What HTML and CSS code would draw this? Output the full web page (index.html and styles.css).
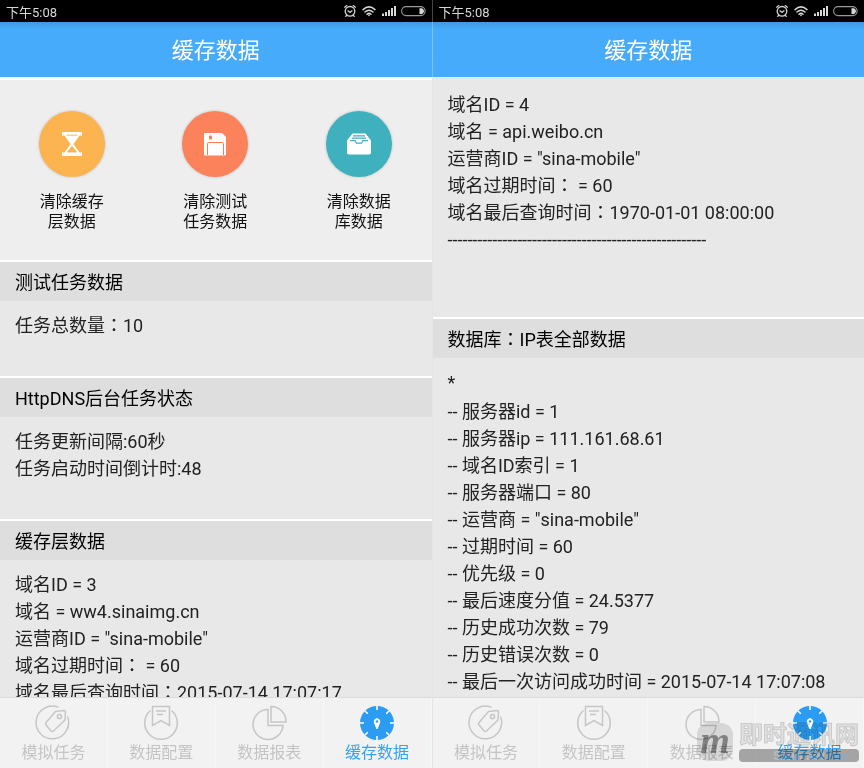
FILE: index.html
```html
<!DOCTYPE html>
<html lang="zh-CN">
<head>
<meta charset="utf-8">
<meta name="viewport" content="width=device-width, initial-scale=1">
<title>缓存数据</title>
<link rel="stylesheet" href="styles.css">
</head>
<body>
<svg class="defs" aria-hidden="true">
  <symbol id="status" viewBox="0 0 84 16">
    <g fill="none" stroke="#d4d4d4" stroke-width="1.3" stroke-linecap="round">
      <circle cx="8" cy="8.300" r="4.800"/>
      <path d="M6 7.800L8 9.400L10 7.800M2.700 4.200L4.700 2.600M13.300 4.200L11.300 2.600M4.600 12.300L3.800 13.400M11.400 12.300L12.200 13.400"/>
      <path d="M21 6.600Q27 1.200 33 6.600M23 9Q27 5.400 31 9M25 11.200Q27 9.400 29 11.200" stroke-width="1.500"/>
      <rect x="59.600" y="3.600" width="23.500" height="9" rx="4.500" stroke="#999" stroke-width="1.100"/>
    </g>
    <path d="M25.600 11.500H28.400L27 13.400ZM40 10.500h2v2.500h-2zM43 9h2v4h-2zM46 7h2v6h-2zM49 5h2v8h-2zM52 3h2v10h-2zM77.500 5.200H80Q82 6.300 82 8.100T80 11H77.500Z" fill="#d8d8d8"/>
  </symbol>
  <symbol id="tag" viewBox="0 0 36 36">
    <path d="M23.500 2.400A16.300 16.300 0 1 0 32.500 11.500"/>
    <path d="M20.500 6.500L29 5.500Q30.500 5.500 30.500 7L30 15L18.500 26Q17 27 16 26L10.800 19.500Q10 18.300 11.300 17.200Z"/>
    <circle cx="24.500" cy="11.500" r="2.100"/>
  </symbol>
  <symbol id="bookmark" viewBox="0 0 36 36">
    <path d="M7.500 5.500A16.300 16.300 0 1 0 28.500 5.500"/>
    <path d="M9.500 1.500H26.500V20.500L18 15.500L9.500 20.500ZM13 6H23M14 9.500H20"/>
  </symbol>
  <symbol id="pie" viewBox="0 0 36 36">
    <path d="M17 4.500A15 15 0 1 0 32 20.500H17Z"/>
    <path d="M20 1.500A15 15 0 0 1 35 17H20Z"/>
  </symbol>
  <symbol id="clock" viewBox="0 0 36 36">
    <circle cx="18" cy="18" r="17" fill="#2b9cf2" stroke="none"/>
    <path d="M18 1V5M18 31V35M1 18H5M31 18H35M6 6L8.800 8.800M27.200 27.200L30 30M6 30L8.800 27.200M27.200 8.800L30 6" stroke="#fff"/>
    <path d="M18 24L15.500 18A2.800 3 0 1 1 20.500 18Z" fill="#fff" stroke="#fff" stroke-width="1"/>
    <circle cx="18" cy="16.500" r="1.200" fill="#2b9cf2" stroke="none"/>
  </symbol>
</svg>

<div class="screens">
  <section class="phone">
    <div class="statusbar"><span>下午5:08</span><svg class="status-icons" aria-hidden="true"><use href="#status"/></svg></div>
    <header class="titlebar"><h1>缓存数据</h1></header>
    <main class="content">
      <div class="actions">
        <button type="button" class="action">
          <span class="disc amber"><svg viewBox="0 0 24 24" aria-hidden="true"><path d="M2 0H22V3.500H19.500L13.500 12L19.500 20.500H22V24H2V20.500H4.500L10.500 12L4.500 3.500H2Z" fill="#fff"/><path d="M6.500 3.200H17.500M7.500 20L12 14.500L16.500 20Z" fill="#fbb450" stroke="#fbb450"/></svg></span>
          <span>清除缓存<br>层数据</span>
        </button>
        <button type="button" class="action">
          <span class="disc coral"><svg viewBox="0 0 24 24" aria-hidden="true"><path d="M1 1H19L23 5V22.500Q23 23.500 22 23.500H2Q1 23.500 1 22.500Z" fill="#fff"/><rect x="6" y="3.500" width="3" height="4" rx="1" fill="#f97c55"/><path d="M4.500 23V11.500Q4.500 10.500 5.500 10.500H19.500Q20.500 10.500 20.500 11.500V23" fill="none" stroke="#f97c55"/></svg></span>
          <span>清除测试<br>任务数据</span>
        </button>
        <button type="button" class="action">
          <span class="disc teal"><svg viewBox="0 0 24 24" aria-hidden="true"><path d="M5.500 1.500H18.500L24 8.500V20.500Q24 22.500 22 22.500H2Q0 22.500 0 20.500V8.500Z" fill="#fff"/><path d="M6 3.800H18M5 6.200H19M3 8.700H8L9.500 11.200H14.500L16 8.700H21" fill="none" stroke="#3fb0bd" stroke-width="1.200"/></svg></span>
          <span>清除数据<br>库数据</span>
        </button>
      </div>
      <section class="group">
        <h2>测试任务数据</h2>
        <div class="lines"><p>任务总数量<span lang="zh-TW" class="colon">：</span>10</p></div>
      </section>
      <section class="group">
        <h2>HttpDNS后台任务状态</h2>
        <div class="lines"><p>任务更新间隔:60秒</p><p>任务启动时间倒计时:48</p></div>
      </section>
      <section class="group">
        <h2>缓存层数据</h2>
        <div class="lines">
          <p>域名ID = 3</p>
          <p>域名 = ww4.sinaimg.cn</p>
          <p>运营商ID = "sina-mobile"</p>
          <p>域名过期时间<span lang="zh-TW" class="colon">：</span> = 60</p>
          <p>域名最后查询时间<span lang="zh-TW" class="colon">：</span>2015-07-14 17:07:17</p>
        </div>
      </section>
    </main>
    <nav class="tabs">
      <a href="#"><svg aria-hidden="true"><use href="#tag"/></svg>模拟任务</a>
      <a href="#"><svg aria-hidden="true"><use href="#bookmark"/></svg>数据配置</a>
      <a href="#"><svg aria-hidden="true"><use href="#pie"/></svg>数据报表</a>
      <a href="#" class="active" aria-current="page"><svg aria-hidden="true"><use href="#clock"/></svg>缓存数据</a>
    </nav>
  </section>

  <section class="phone">
    <div class="statusbar"><span>下午5:08</span><svg class="status-icons" aria-hidden="true"><use href="#status"/></svg></div>
    <header class="titlebar"><h1>缓存数据</h1></header>
    <main class="content">
      <div class="lines scrolled">
        <p>域名ID = 4</p>
        <p>域名 = api.weibo.cn</p>
        <p>运营商ID = "sina-mobile"</p>
        <p>域名过期时间<span lang="zh-TW" class="colon">：</span> = 60</p>
        <p>域名最后查询时间<span lang="zh-TW" class="colon">：</span>1970-01-01 08:00:00</p>
        <p>----------------------------------------------------</p>
        <p><br></p>
      </div>
      <section class="group">
        <h2>数据库<span lang="zh-TW" class="colon">：</span>IP表全部数据</h2>
        <div class="lines">
          <p>*</p>
          <div class="record">
            <p>-- 服务器id = 1</p>
            <p>-- 服务器ip = 111.161.68.61</p>
            <p>-- 域名ID索引 = 1</p>
            <p>-- 服务器端口 = 80</p>
            <p>-- 运营商 = "sina-mobile"</p>
            <p>-- 过期时间 = 60</p>
            <p>-- 优先级 = 0</p>
            <p>-- 最后速度分值 = 24.5377</p>
            <p>-- 历史成功次数 = 79</p>
            <p>-- 历史错误次数 = 0</p>
            <p>-- 最后一次访问成功时间 = 2015-07-14 17:07:08</p>
          </div>
        </div>
      </section>
    </main>
    <nav class="tabs">
      <a href="#"><svg aria-hidden="true"><use href="#tag"/></svg>模拟任务</a>
      <a href="#"><svg aria-hidden="true"><use href="#bookmark"/></svg>数据配置</a>
      <a href="#"><svg aria-hidden="true"><use href="#pie"/></svg>数据报表</a>
      <a href="#" class="active" aria-current="page"><svg aria-hidden="true"><use href="#clock"/></svg>缓存数据</a>
    </nav>
    <div class="watermark">
      <span class="mark">m</span>
      <span class="brand"><span class="name">即时通讯网</span><span class="site">52im.net</span></span>
    </div>
  </section>
</div>
</body>
</html>
```
FILE: styles.css
```css
* { box-sizing: border-box; }

body {
  margin: 0;
  background: #e8e8e8;
  color: #222;
  font-family: Roboto, "Noto Sans CJK SC", sans-serif;
  font-size: 18px;
}

h1, h2, p { margin: 0; font-weight: 400; }

.defs { position: absolute; width: 0; height: 0; }

.screens { display: flex; height: 100vh; }

.phone {
  position: relative;
  flex: 1;
  min-width: 0;
  display: flex;
  flex-direction: column;
}

.phone + .phone { border-left: 1px solid #e4e4e4; }

.phone + .phone .statusbar,
.phone + .phone .titlebar { margin-left: -1px; border-left: 1px solid #ffffff44; }

.statusbar {
  flex: none;
  display: flex;
  align-items: center;
  justify-content: space-between;
  height: 22px;
  padding: 0 6px;
  background: #000;
  color: #d8d8d8;
  font-size: 13px;
}

.status-icons { width: 84px; height: 16px; }

.titlebar {
  flex: none;
  display: flex;
  align-items: center;
  justify-content: center;
  height: 55px;
  padding-top: 3px;
  background: linear-gradient(#4598da, #46abfa 7px);
  color: #fff;
}

.titlebar h1 { font-size: 22px; line-height: 32px; }

.content { flex: 1; min-height: 0; overflow: hidden; }

.actions {
  display: grid;
  grid-template-columns: repeat(3, 1fr);
  padding: 31px 1px 28px 0;
  border-top: 3px solid #fff;
  background: #eee;
}

.action {
  display: flex;
  flex-direction: column;
  align-items: center;
  gap: 15px;
  padding: 0;
  border: 0;
  background: none;
  color: #111;
  font: inherit;
  font-size: 16px;
  line-height: 20px;
}

.disc {
  display: flex;
  align-items: center;
  justify-content: center;
  width: 66px;
  height: 66px;
  border-radius: 50%;
  box-shadow: 0 0 3px #00000033;
}

.disc svg { width: 24px; height: 24px; }
.amber { background: #fbb450; }
.coral { background: #fb825b; }
.teal { background: #3fb0bd; }

.group { border-top: 2px solid #fff; }

.group h2 {
  padding: 7px 15px 5px;
  background: #dedede;
  color: #000;
  font-size: 18px;
  line-height: 27px;
}

.lines { padding: 11px 15px 37px; line-height: 27px; white-space: nowrap; }
.scrolled { padding-top: 14px; }
.record { margin-top: 2px; }
.colon { font-family: "Noto Sans CJK TC", sans-serif; line-height: 1; }

.tabs {
  flex: none;
  display: grid;
  grid-template-columns: repeat(4, 1fr);
  height: 71px;
  border-top: 1px solid #dcdcdc;
  background: #f2f2f2;
}

.tabs a {
  display: flex;
  flex-direction: column;
  align-items: center;
  padding-top: 7px;
  border-right: 1px solid #f7f7f7;
  color: #c4c4c4;
  font-size: 16px;
  line-height: 24px;
  text-decoration: none;
}

.tabs svg {
  width: 36px;
  height: 36px;
  fill: none;
  stroke: #c6c6c6;
  stroke-width: 1.5px;
}

.tabs .active { color: #35a2f3; }

.watermark {
  position: absolute;
  right: 5px;
  bottom: 6px;
  display: flex;
  align-items: center;
  gap: 6px;
  pointer-events: none;
  mix-blend-mode: multiply;
}

.mark {
  width: 36px;
  height: 38px;
  border-radius: 12px;
  background: #e2e2e2;
  color: #888;
  font: italic bold 38px/34px "Liberation Serif", serif;
  text-align: center;
}

.brand { display: flex; flex-direction: column; }

.name {
  color: #eee;
  font-size: 24px;
  font-weight: 700;
  line-height: 28px;
  -webkit-text-stroke: 1px #d4d4d4;
}

.site {
  border-radius: 4px;
  background: #adadad;
  color: #c4c4c4;
  font-size: 13px;
  font-weight: 700;
  line-height: 13px;
  text-align: center;
}
```
